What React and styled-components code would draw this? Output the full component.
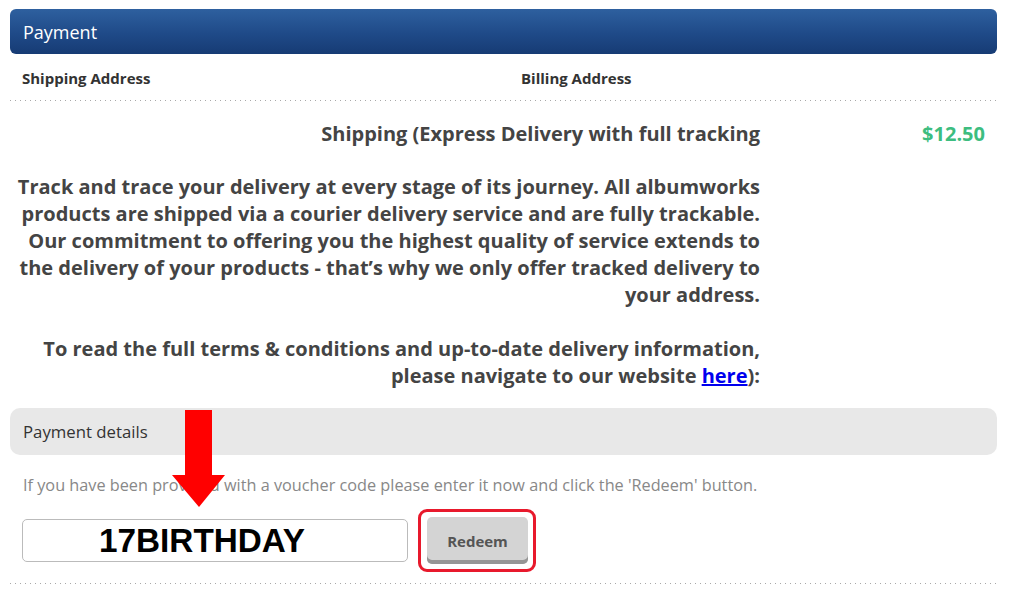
import React from "react";
import styled, { createGlobalStyle } from "styled-components";

const Global = createGlobalStyle`
  html, body { margin: 0; padding: 0; background: #fff; }
  body { font-family: "Open Sans", "Liberation Sans", sans-serif; color: #444; }
`;

const Page = styled.div`
  position: relative;
  padding: 9px 17px 0 10px;
  width: 1014px;
  box-sizing: border-box;
`;

const Header = styled.div`
  height: 45px;
  border-radius: 6px;
  background: linear-gradient(to bottom, #2e609f 0%, #1f4a88 55%, #163b74 100%);
  color: #fff;
  font-size: 18px;
  display: flex;
  align-items: center;
  padding-left: 13px;
`;

const Dotted = styled.div`
  height: 1px;
  background-image: repeating-linear-gradient(to right, #a8a8a8 0 1px, transparent 1px 5px);
`;

const AddressRow = styled.div`
  display: grid;
  grid-template-columns: 499px 1fr;
  padding: 14px 12px 12px;
  font-size: 15px;
  font-weight: 700;
  color: #333;
  line-height: 20px;
`;

const ShippingRow = styled.div`
  display: grid;
  grid-template-columns: 750px 1fr;
  margin-top: 19px;
  font-size: 20px;
  font-weight: 700;
  line-height: 27px;
`;

const ShipLabel = styled.div`
  text-align: right;
  color: #444;
`;

const Price = styled.div`
  text-align: right;
  padding-right: 12px;
  color: #3dbd80;
`;

const Info = styled.p`
  width: 750px;
  margin: ${(p) => (p.$first ? "26px" : "27px")} 0 0;
  text-align: right;
  font-size: 20px;
  font-weight: 700;
  line-height: 27px;
  color: #444;
  white-space: nowrap;
`;

const Link = styled.a`
  color: #0000ee;
  text-decoration: underline;
`;

const DetailsBar = styled.div`
  margin-top: 19px;
  height: 47px;
  border-radius: 10px;
  background: #e8e8e8;
  display: flex;
  align-items: center;
  padding-left: 13px;
  font-size: 16.75px;
  color: #333;
`;

const Note = styled.p`
  margin: 19px 0 0 13px;
  font-size: 16.25px;
  line-height: 22px;
  color: #888;
`;

const VoucherRow = styled.div`
  display: flex;
  align-items: center;
  gap: 10px;
  margin: 13px 0 0 12px;
  padding-bottom: 11px;
`;

const CodeInput = styled.div`
  width: 386px;
  height: 43px;
  box-sizing: border-box;
  border: 1px solid #bbb;
  border-radius: 5px;
  display: flex;
  align-items: center;
  padding-left: 76px;
  font-family: "Liberation Sans", Arial, sans-serif;
  font-weight: 700;
  font-size: 33.3px;
  color: #000;
`;

const Highlight = styled.div`
  border: 3px solid #e8192c;
  border-radius: 9px;
  padding: 5px 5px 5px 6px;
  display: flex;
`;

const RedeemButton = styled.button`
  width: 101px;
  height: 47px;
  box-sizing: border-box;
  border: none;
  border-radius: 5px;
  background: #d4d4d4;
  box-shadow: inset 0 -4px 0 #959595;
  padding: 0;
  font-family: "Open Sans", sans-serif;
  font-weight: 700;
  font-size: 15px;
  color: #555;
`;

const Arrow = styled.svg`
  position: absolute;
  left: 172px;
  top: 410px;
`;

export default function App() {
  return (
    <>
      <Global />
      <Page>
        <Header>Payment</Header>
        <AddressRow>
          <div>Shipping Address</div>
          <div>Billing Address</div>
        </AddressRow>
        <Dotted />
        <ShippingRow>
          <ShipLabel>Shipping (Express Delivery with full tracking</ShipLabel>
          <Price>$12.50</Price>
        </ShippingRow>
        <Info $first>
          Track and trace your delivery at every stage of its journey. All albumworks
          <br />
          products are shipped via a courier delivery service and are fully trackable.
          <br />
          Our commitment to offering you the highest quality of service extends to
          <br />
          the delivery of your products - that’s why we only offer tracked delivery to
          <br />
          your address.
        </Info>
        <Info>
          To read the full terms &amp; conditions and up-to-date delivery information,
          <br />
          please navigate to our website <Link href="#">here</Link>):
        </Info>
        <DetailsBar>Payment details</DetailsBar>
        <Note>
          If you have been provided with a voucher code please enter it now and click the 'Redeem' button.
        </Note>
        <VoucherRow>
          <CodeInput>17BIRTHDAY</CodeInput>
          <Highlight>
            <RedeemButton>Redeem</RedeemButton>
          </Highlight>
        </VoucherRow>
        <Dotted />
        <Arrow width="53" height="98" viewBox="0 0 53 98">
          <polygon points="13,0 40,0 40,65 53,65 27,97 0,65 13,65" fill="#ff0000" />
        </Arrow>
      </Page>
    </>
  );
}
